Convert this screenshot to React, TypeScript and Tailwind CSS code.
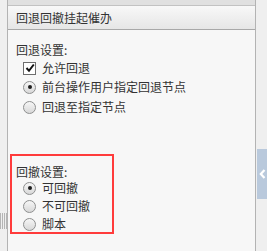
import React from 'react';

const font = { fontFamily: '"Noto Sans CJK SC", "Liberation Sans", sans-serif' };

const Radio = ({ checked, label }: { checked?: boolean; label: string }) => (
  <div className="flex items-center h-[18px]">
    <span className="w-[13px] h-[13px] rounded-full border border-[#8e8f8f] bg-gradient-to-b from-[#f6f6f6] to-[#d8d8d8] flex items-center justify-center shrink-0">
      {checked && <span className="w-[4px] h-[4px] rounded-full bg-[#1e1e1e]" />}
    </span>
    <span className="ml-[6px] text-[12px] leading-[14px] text-[#333]">{label}</span>
  </div>
);

const Checkbox = ({ checked, label }: { checked?: boolean; label: string }) => (
  <div className="flex items-center h-[20px]">
    <span className="w-[13px] h-[13px] border border-[#6e6e6e] bg-white flex items-center justify-center shrink-0">
      {checked && (
        <svg width="10" height="10" viewBox="0 0 10 10">
          <path d="M1.5 5 L4 7.8 L8.8 1.5" stroke="#111" strokeWidth="2" fill="none" />
        </svg>
      )}
    </span>
    <span className="ml-[6px] text-[12px] leading-[14px] text-[#333]">{label}</span>
  </div>
);

export default function App() {
  return (
    <div className="w-[267px] h-[251px] flex bg-[#efefef] overflow-hidden" style={font}>
      <div className="w-[7px] flex flex-col">
        <div className="h-[213px]" />
        <div className="flex gap-[1px] h-[16px]">
          <span className="w-[1px] bg-[#b5b5b5]" />
          <span className="w-[1px] bg-[#b5b5b5]" />
          <span className="w-[1px] bg-[#b5b5b5]" />
          <span className="w-[1px] bg-[#b5b5b5]" />
        </div>
      </div>
      <div className="w-[249px] flex flex-col border-x border-[#b3b3b3] bg-[#f7f7f7]">
        <div className="h-[6px] bg-[#e0e0e0] border-b border-[#c2c2c2]" />
        <div className="h-[24px] bg-gradient-to-b from-[#f8f8f8] to-[#e6e6e6] border-b border-[#a8a8a8] flex items-center pl-[8px]">
          <span className="text-[12px] text-[#333]">回退回撤挂起催办</span>
        </div>
        <div className="pl-[8px] pt-[13px]">
          <div className="text-[12px] leading-[14px] text-[#333]">回退设置:</div>
          <div className="pl-[7px] pt-[1px]">
            <Checkbox checked label="允许回退" />
            <div className="flex flex-col gap-[2px]">
              <Radio checked label="前台操作用户指定回退节点" />
              <Radio label="回退至指定节点" />
            </div>
          </div>
        </div>
        <div className="ml-[2px] mt-[38px] w-[104px] h-[80px] border-2 border-[#ff3b3b] pl-[4px] pt-[9px]">
          <div className="text-[12px] leading-[14px] text-[#333]">回撤设置:</div>
          <div className="pl-[7px]">
            <Radio checked label="可回撤" />
            <Radio label="不可回撤" />
            <Radio label="脚本" />
          </div>
        </div>
      </div>
      <div className="flex-1 flex flex-col">
        <div className="h-[149px]" />
        <div className="h-[50px] ml-[1px] bg-[#b9c9dc] flex items-center pl-[2px]">
          <svg width="7" height="10" viewBox="0 0 7 10">
            <path d="M5.5 1 L1.8 5 L5.5 9" stroke="#fff" strokeWidth="2.2" fill="none" />
          </svg>
        </div>
      </div>
    </div>
  );
}
